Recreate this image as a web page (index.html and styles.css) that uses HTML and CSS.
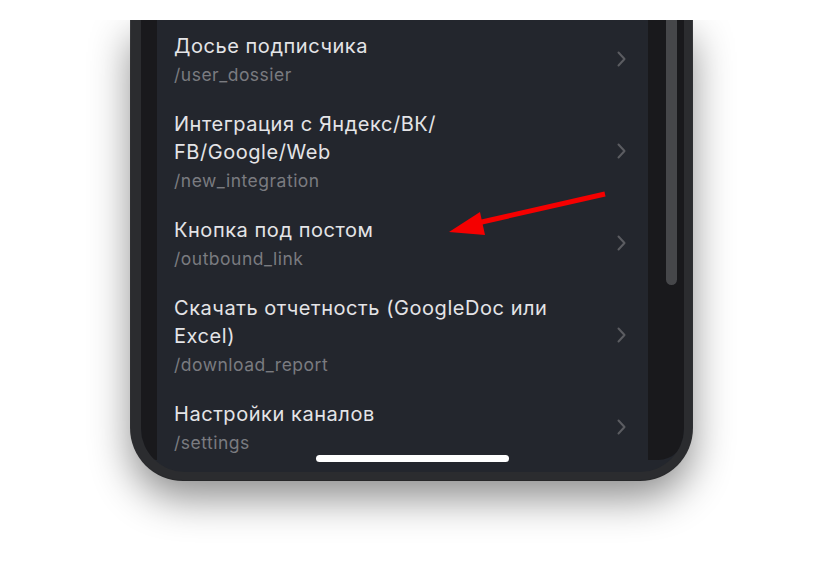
FILE: index.html
```html
<!DOCTYPE html>
<html lang="ru">
<head>
<meta charset="utf-8">
<title>Команды бота</title>
<link rel="stylesheet" href="styles.css">
</head>
<body>
<div class="stage">
  <div class="clip">
    <div class="phone">
      <div class="display">
        <div class="bezel bezel-left"></div>
        <div class="screen">
          <ul class="list">
            <li class="row">
              <div class="texts">
                <div class="title">Досье подписчика</div>
                <div class="cmd">/user_dossier</div>
              </div>
              <span class="chev"><svg width="9" height="16" viewBox="0 0 9 16"><path d="M1.5 1.5 L7.5 8 L1.5 14.5" fill="none" stroke="#5b5c61" stroke-width="2" stroke-linecap="round" stroke-linejoin="round"/></svg></span>
            </li>
            <li class="row">
              <div class="texts">
                <div class="title">Интеграция с Яндекс/ВК/<br>FB/Google/Web</div>
                <div class="cmd">/new_integration</div>
              </div>
              <span class="chev"><svg width="9" height="16" viewBox="0 0 9 16"><path d="M1.5 1.5 L7.5 8 L1.5 14.5" fill="none" stroke="#5b5c61" stroke-width="2" stroke-linecap="round" stroke-linejoin="round"/></svg></span>
            </li>
            <li class="row">
              <div class="texts">
                <div class="title">Кнопка под постом</div>
                <div class="cmd">/outbound_link</div>
              </div>
              <span class="chev"><svg width="9" height="16" viewBox="0 0 9 16"><path d="M1.5 1.5 L7.5 8 L1.5 14.5" fill="none" stroke="#5b5c61" stroke-width="2" stroke-linecap="round" stroke-linejoin="round"/></svg></span>
            </li>
            <li class="row">
              <div class="texts">
                <div class="title">Скачать отчетность (GoogleDoc или<br>Excel)</div>
                <div class="cmd">/download_report</div>
              </div>
              <span class="chev"><svg width="9" height="16" viewBox="0 0 9 16"><path d="M1.5 1.5 L7.5 8 L1.5 14.5" fill="none" stroke="#5b5c61" stroke-width="2" stroke-linecap="round" stroke-linejoin="round"/></svg></span>
            </li>
            <li class="row">
              <div class="texts">
                <div class="title">Настройки каналов</div>
                <div class="cmd">/settings</div>
              </div>
              <span class="chev"><svg width="9" height="16" viewBox="0 0 9 16"><path d="M1.5 1.5 L7.5 8 L1.5 14.5" fill="none" stroke="#5b5c61" stroke-width="2" stroke-linecap="round" stroke-linejoin="round"/></svg></span>
            </li>
          </ul>
          <svg class="arrow" width="200" height="80" viewBox="0 0 200 80">
            <line x1="156" y1="6" x2="24" y2="36" stroke="#f50000" stroke-width="5" stroke-linecap="butt"/>
            <polygon points="0,44 31,24 36,47" fill="#f50000"/>
          </svg>
        </div>
        <div class="bezel bezel-right">
          <div class="scrollbar"></div>
        </div>
        <div class="home"></div>
      </div>
    </div>
  </div>
</div>
</body>
</html>
```

FILE: styles.css
```css
html, body {
  margin: 0;
  padding: 0;
  background: #ffffff;
}

.stage {
  padding-top: 20px;
}

.clip {
  height: 548px;
  overflow: hidden;
}

.phone {
  margin-left: 131px;
  width: 561px;
  height: 460px;
  box-sizing: border-box;
  padding: 0 8px 8px 10px;
  background: #2b2c2f;
  border-radius: 0 0 52px 52px;
  box-shadow: 0 18px 40px rgba(0, 0, 0, 0.45), 0 0 0 1px #3c3d40;
}

.display {
  position: relative;
  display: flex;
  height: 100%;
  background: #23262d;
  border-radius: 0 0 44px 44px;
  overflow: hidden;
}

.bezel {
  background: #19191c;
  height: 440px;
  flex: none;
}

.bezel-left {
  width: 16px;
  border-bottom-left-radius: 26px;
}

.bezel-right {
  width: 36px;
  border-bottom-right-radius: 26px;
}

.scrollbar {
  margin-left: 18px;
  width: 11px;
  height: 265px;
  background: #46474a;
  border-radius: 0 0 6px 6px;
}

.screen {
  position: relative;
  width: 491px;
  flex: none;
}

.list {
  list-style: none;
  margin: 0;
  padding: 0;
}

.row {
  display: flex;
  align-items: center;
  padding: 12px 0 12px 17px;
}

.texts {
  flex: 1;
  min-width: 0;
}

.title {
  font-family: Inter, "Noto Sans", sans-serif;
  font-size: 20px;
  line-height: 28px;
  color: #e4e4e7;
  letter-spacing: 0.55px;
}

.cmd {
  margin-top: 4px;
  font-family: Inter, "Noto Sans", sans-serif;
  font-size: 17.5px;
  line-height: 22px;
  color: #7a7b80;
  letter-spacing: 0.5px;
}

.chev {
  flex: none;
  display: flex;
  width: 9px;
  height: 16px;
  margin-right: 22px;
  margin-left: 10px;
}

.arrow {
  position: absolute;
  left: 292px;
  top: 168px;
}

.home {
  position: absolute;
  left: 175px;
  bottom: 10px;
  width: 193px;
  height: 7px;
  border-radius: 4px;
  background: #ffffff;
}
```
